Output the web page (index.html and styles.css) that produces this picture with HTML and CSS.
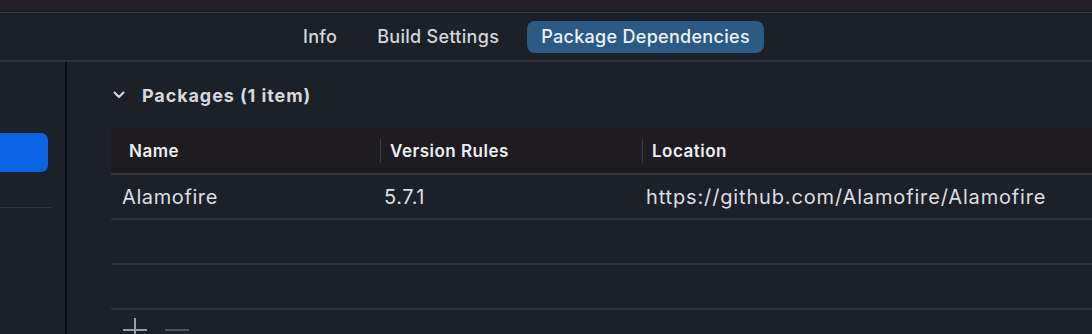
FILE: index.html
```html
<!DOCTYPE html>
<html lang="en">
<head>
  <meta charset="UTF-8">
  <title>Package Dependencies</title>
  <link rel="stylesheet" href="styles.css">
</head>
<body>
  <div class="titlebar"></div>
  <div class="tabbar">
    <span class="tab">Info</span>
    <span class="tab">Build Settings</span>
    <span class="tab tab-active">Package Dependencies</span>
  </div>
  <div class="main">
    <div class="sidebar">
      <div class="sidebar-item"></div>
      <div class="sidebar-sep"></div>
    </div>
    <div class="content">
      <div class="section-head">
        <svg class="chevron" width="12" height="8" viewBox="0 0 12 8"><path d="M1.5 1.5 L6 6 L10.5 1.5" fill="none" stroke="#d8dade" stroke-width="2" stroke-linecap="round" stroke-linejoin="round"/></svg>
        <span>Packages (1 item)</span>
      </div>
      <div class="table">
        <div class="row row-head">
          <div class="cell">Name</div>
          <div class="cell"><span class="col-sep"></span>Version Rules</div>
          <div class="cell"><span class="col-sep"></span>Location</div>
        </div>
        <div class="row">
          <div class="cell">Alamofire</div>
          <div class="cell">5.7.1</div>
          <div class="cell url">https://github.com/Alamofire/Alamofire</div>
        </div>
        <div class="row">
          <div class="cell"></div>
          <div class="cell"></div>
          <div class="cell"></div>
        </div>
        <div class="row row-empty"></div>
      </div>
      <div class="actions">
        <svg width="26" height="26" viewBox="0 0 26 26"><path d="M13 8 V26 M1 20 H25" stroke="#9a9da3" stroke-width="2"/></svg>
        <svg width="26" height="26" viewBox="0 0 26 26"><path d="M1 20 H25" stroke="#50545c" stroke-width="2"/></svg>
      </div>
    </div>
  </div>
</body>
</html>
```

FILE: styles.css
```css
body {
  margin: 0;
  background: #1c2129;
  font-family: Inter, "Noto Sans", sans-serif;
  color: #e2e4e8;
  height: 334px;
  overflow: hidden;
}

.titlebar {
  height: 12px;
  background: #221f26;
  border-bottom: 1px solid #3a3a42;
}

.tabbar {
  height: 47px;
  display: flex;
  align-items: center;
  gap: 12px;
  padding-left: 289px;
  border-bottom: 2px solid #30323a;
  font-size: 18px;
  font-weight: 500;
  letter-spacing: 0.3px;
}

.tab {
  padding: 0 14px;
  line-height: 32px;
  color: #d4d6da;
  border-radius: 8px;
}

.tab-active {
  background: #2b5a85;
  color: #eef1f5;
  margin-left: 2px;
}

.main {
  display: flex;
  height: 273px;
}

.sidebar {
  width: 65px;
  border-right: 2px solid #0b0c0f;
  padding-top: 71px;
}

.sidebar-item {
  width: 48px;
  height: 39px;
  background: #0a63e2;
  border-radius: 0 7px 7px 0;
}

.sidebar-sep {
  width: 51px;
  height: 1px;
  background: #353841;
  margin-top: 35px;
}

.content {
  flex: 1;
  padding-left: 44px;
}

.section-head {
  height: 66px;
  display: flex;
  align-items: center;
  gap: 17px;
  padding-left: 2px;
  font-size: 18px;
  font-weight: 700;
  letter-spacing: 0.9px;
  color: #d6d8dc;
}

.table {
  display: flex;
  flex-direction: column;
}

.row {
  display: grid;
  grid-template-columns: 269px 262px 1fr;
  height: 43px;
  border-bottom: 2px solid #2f313a;
  align-items: center;
  font-size: 20px;
  letter-spacing: 0.6px;
  color: #dcdee2;
}

.row .cell {
  padding-left: 11px;
  white-space: nowrap;
}

.row .cell + .cell {
  padding-left: 4px;
}

.row .url {
  letter-spacing: 0.85px;
}

.row-head {
  background: #1e1b21;
  height: 45px;
  border-bottom-color: #363840;
  font-size: 17px;
  font-weight: 600;
  letter-spacing: 0.5px;
  color: #eceef1;
}

.row-head .cell {
  padding-left: 18px;
  display: flex;
  align-items: center;
  height: 100%;
}

.row-head .cell + .cell {
  padding-left: 0;
}

.col-sep {
  width: 1px;
  height: 24px;
  background: #3b3d45;
  margin-right: 9px;
}

.row-empty {
  display: block;
}

.actions {
  display: flex;
  gap: 16px;
  padding-left: 11px;
}
```
